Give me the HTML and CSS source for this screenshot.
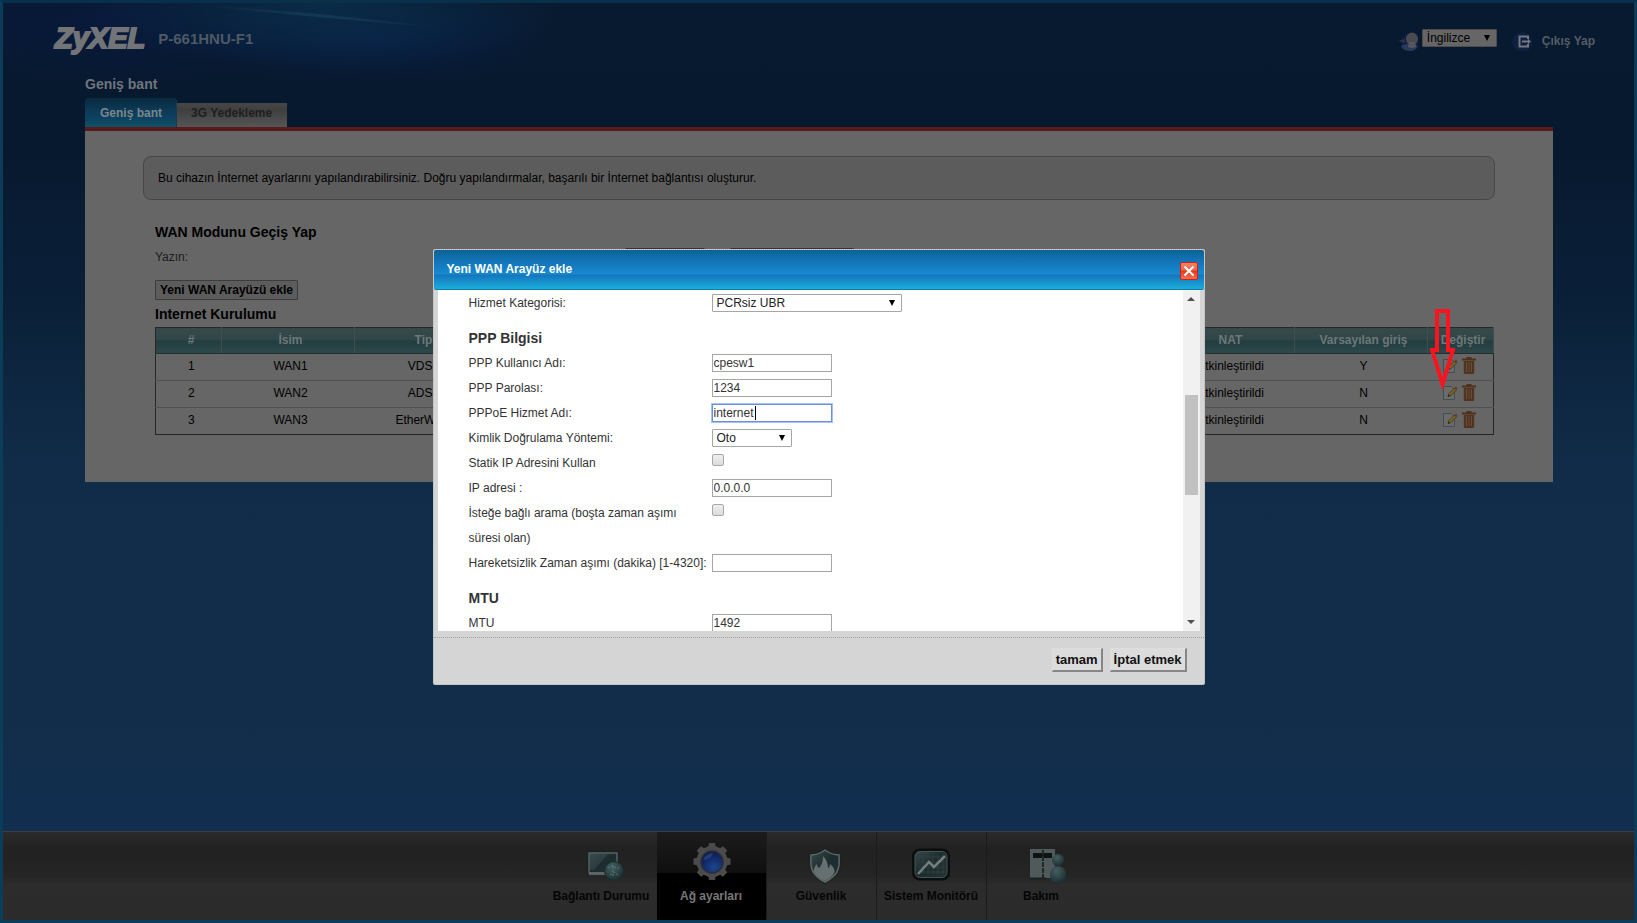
FILE: index.html
```html
<!DOCTYPE html>
<html lang="tr">
<head>
<meta charset="utf-8">
<title>ZyXEL P-661HNU-F1</title>
<link rel="stylesheet" href="styles.css">
</head>
<body>
<svg class="defs" aria-hidden="true">
  <defs>
    <linearGradient id="steel" x1="0" y1="0" x2="1" y2="1"><stop offset="0" stop-color="#39494b"/><stop offset=".5" stop-color="#1c2b2d"/><stop offset="1" stop-color="#243436"/></linearGradient>
    <radialGradient id="lens" cx=".6" cy=".75" r=".8"><stop offset="0" stop-color="#1d458c"/><stop offset=".6" stop-color="#10296a"/><stop offset="1" stop-color="#0b173c"/></radialGradient>
    <radialGradient id="ball" cx=".4" cy=".3" r=".7"><stop offset="0" stop-color="#445f61"/><stop offset="1" stop-color="#1c3033"/></radialGradient>
    <linearGradient id="beam" x1="0" y1="0" x2="1" y2="0"><stop offset="0" stop-color="#2c5f80" stop-opacity="0"/><stop offset=".5" stop-color="#2c5f80" stop-opacity=".3"/><stop offset="1" stop-color="#2c5f80" stop-opacity="0"/></linearGradient>
    <symbol id="edit" viewBox="0 0 16 16">
      <path d="M1.500 1.500h8l3 3v10h-11z" fill="#6b6b6b" stroke="#454c52"/>
      <path d="M6 11.500 7 8.500 12.500 3l2 2L9 10.500z" fill="#7a6522" stroke="#3d3412" stroke-width=".8"/>
      <path d="M12.300 3.200 14 1.500l1.500 1.500-1.400 1.700z" fill="#6b3a2c"/>
      <path d="M6 11.500l.6-1.800 1.200 1.200z" fill="#171717"/>
    </symbol>
    <symbol id="trash" viewBox="0 0 14 17">
      <path d="M0 1.500h4.500V0h5v1.500H14v2H0z" fill="#4e301b"/>
      <path d="M1.800 4h10.400v11.500q0 1.500-1.500 1.500H3.300q-1.500 0-1.500-1.500z" fill="#51331e"/>
      <path d="M4.500 5v10M7 5v10M9.500 5v10" stroke="#67513f" stroke-width=".9"/>
    </symbol>
  </defs>
</svg>
<div class="frame">
  <svg class="beam" viewBox="0 0 260 40" aria-hidden="true"><path d="M0 2Q120 8 260 26Q120 14 0 2z" fill="url(#beam)"/></svg>
  <header class="top">
    <div class="brand"><span class="logo">ZyXEL</span><span class="model">P-661HNU-F1</span></div>
    <div class="tools">
      <svg class="tool-icon" viewBox="0 0 22 20" aria-hidden="true">
        <circle cx="12" cy="11" r="8.500" fill="#111f40"/>
        <path d="M0 10l7-2v4z" fill="#22334f"/>
        <path d="M3 15q9-5 17 0-2 5-8 5-7 0-9-5z" fill="#293a5c"/>
        <ellipse cx="14" cy="8" rx="6" ry="6.500" fill="#4b4a50"/>
        <path d="M11 11h6l1 5q-4 2-8 0z" fill="#54575f"/>
      </svg>
      <select class="lang" aria-label="Dil"><option>İngilizce</option></select>
      <a class="logout" href="#">
        <svg class="tool-icon" viewBox="0 0 22 20" aria-hidden="true">
          <circle cx="10" cy="11" r="10" fill="#0f2042"/>
          <path d="M16 8V5.500H7.500v10H16V13M10 10.500h7" fill="none" stroke="#77797e" stroke-width="2"/>
          <path d="M16 8l3 2.500-3 2.500z" fill="#77797e"/>
        </svg>
        <span>Çıkış Yap</span>
      </a>
    </div>
  </header>

  <main class="page">
    <h1 class="title">Geniş bant</h1>
    <nav class="tabs">
      <a class="tab tab-on" href="#">Geniş bant</a>
      <a class="tab" href="#">3G Yedekleme</a>
    </nav>
    <section class="panel">
      <p class="info">Bu cihazın İnternet ayarlarını yapılandırabilirsiniz. Doğru yapılandırmalar, başarılı bir İnternet bağlantısı oluşturur.</p>
      <div class="inner">
        <h2 class="h">WAN Modunu Geçiş Yap</h2>
        <div class="type-row">
          <span class="type-label">Yazın:</span>
          <select class="dim type-a" aria-label="Yazın"></select>
          <select class="dim type-b" aria-label="Mod"></select>
        </div>
        <button class="add" type="button">Yeni WAN Arayüzü ekle</button>
        <h2 class="h">Internet Kurulumu</h2>
        <div class="table-wrap">
          <table class="wan">
            <colgroup><col class="c5"><col class="c10"><col class="c10"><col><col class="c10"><col class="c10"><col class="c5"></colgroup>
            <thead><tr><th>#</th><th>İsim</th><th>Tip</th><th></th><th>NAT</th><th>Varsayılan giriş</th><th>Değiştir</th></tr></thead>
            <tbody>
              <tr><td>1</td><td>WAN1</td><td>VDSL</td><td></td><td>Etkinleştirildi</td><td>Y</td><td class="act-cell"><span class="acts"><svg class="edit"><use href="#edit"/></svg><svg class="trash"><use href="#trash"/></svg></span></td></tr>
              <tr><td>2</td><td>WAN2</td><td>ADSL</td><td></td><td>Etkinleştirildi</td><td>N</td><td class="act-cell"><span class="acts"><svg class="edit"><use href="#edit"/></svg><svg class="trash"><use href="#trash"/></svg></span></td></tr>
              <tr><td>3</td><td>WAN3</td><td>EtherWAN</td><td></td><td>Etkinleştirildi</td><td>N</td><td class="act-cell"><span class="acts"><svg class="edit"><use href="#edit"/></svg><svg class="trash"><use href="#trash"/></svg></span></td></tr>
            </tbody>
          </table>
          <svg class="pointer" viewBox="0 0 25 80" aria-hidden="true"><path d="M7 2h11v39h5L12.500 75 2 41h5z" fill="none" stroke="#fb1420" stroke-width="4"/></svg>
        </div>
      </div>
    </section>
  </main>

  <nav class="dock">
    <a class="dock-item" href="#">
      <svg class="dock-icon" viewBox="0 0 44 44" aria-hidden="true">
        <g transform="translate(3)">
        <rect x="5" y="11" width="32" height="24" rx="1" fill="#182122"/>
        <rect x="7" y="13" width="28" height="20" fill="url(#steel)" stroke="#566163" stroke-width="1.500"/>
        <path d="M8 14h18L12 30H8z" fill="#38484a" opacity=".6"/>
        <path d="M7 33.500h28" stroke="#5a6465" stroke-width="3"/>
        <circle cx="32" cy="31" r="9.500" fill="url(#ball)" stroke="#1a2a2c"/>
        <path d="M26 28l4-3 5 4 3-2M28 35l4-3 4 3M31 26v11" fill="none" stroke="#647b7b" stroke-width="1" stroke-dasharray="2 2"/>
        </g>
      </svg>
      <span>Bağlantı Durumu</span>
    </a>
    <a class="dock-item dock-on" href="#">
      <svg class="dock-icon" viewBox="0 0 44 44" aria-hidden="true">
        <g fill="#4b4b4b">
          <g id="teeth"><path d="M19 8l1-5h6l1 5zM19 35l1 5h6l1-5z"/></g>
          <use href="#teeth" transform="rotate(45 23 21.500)"/><use href="#teeth" transform="rotate(90 23 21.500)"/><use href="#teeth" transform="rotate(135 23 21.500)"/>
          <circle cx="23" cy="21.500" r="15.500"/>
        </g>
        <circle cx="23" cy="22" r="11" fill="url(#lens)" stroke="#2e2c3a" stroke-width="1.500"/>
        <path d="M14 20q3-7 10-7-1 6-10 7z" fill="#3a5590" opacity=".5"/>
      </svg>
      <span>Ağ ayarları</span>
    </a>
    <a class="dock-item" href="#">
      <svg class="dock-icon" viewBox="0 0 44 44" aria-hidden="true">
        <path d="M26 10q-7 5-14 5-1 11 2 17 4 6 12 10 8-4 12-10 3-6 2-17-7 0-14-5z" fill="url(#steel)" stroke="#1c2222" stroke-width="4"/>
        <path d="M26 10q-7 5-14 5-1 11 2 17 4 6 12 10 8-4 12-10 3-6 2-17-7 0-14-5z" fill="url(#steel)" stroke="#5f6767" stroke-width="1.500"/>
        <path d="M26 41q-9-4-11.500-10 1-5 3.500-7 0 3 2 4 4-4 4-12 5 5 5 12 2-1 2-4 5 4 4.500 8Q33 38 26 41z" fill="#667070"/>
      </svg>
      <span>Güvenlik</span>
    </a>
    <a class="dock-item" href="#">
      <svg class="dock-icon" viewBox="0 0 44 44" aria-hidden="true">
        <rect x="4.500" y="10" width="35" height="29" rx="6" fill="url(#steel)" stroke="#0a0e0e" stroke-width="3"/>
        <rect x="6" y="11.500" width="32" height="26" rx="5" fill="none" stroke="#465353"/>
        <path d="M10 17h26M10 22h26M10 27h26M10 32h26M14 14v20M19 14v20M24 14v20M29 14v20M34 14v20" stroke="#354544" stroke-width=".7"/>
        <path d="M9 34l11-12 5 5 11-11" fill="none" stroke="#767f7f" stroke-width="2.500"/>
      </svg>
      <span>Sistem Monitörü</span>
    </a>
    <a class="dock-item" href="#">
      <svg class="dock-icon" viewBox="0 0 44 44" aria-hidden="true">
        <path d="M11 9h25v29H11z" fill="#515a5b"/>
        <path d="M14 13h19v5H14z" fill="#0e1212"/>
        <path d="M24 10v29" stroke="#202828" stroke-width="2" stroke-dasharray="5 1"/>
        <path d="M11 38.500h16" stroke="#182020" stroke-width="2"/>
        <circle cx="39" cy="20" r="6" fill="url(#ball)"/>
        <path d="M31 36q0-10 8-10t8 10q-1 7-8 7t-8-7z" fill="url(#ball)"/>
      </svg>
      <span>Bakım</span>
    </a>
  </nav>
</div>

<div class="overlay">
  <form class="dialog" role="dialog" aria-labelledby="dlg-title">
    <div class="dlg-head">
      <h2 class="dlg-title" id="dlg-title">Yeni WAN Arayüz ekle</h2>
      <button class="close" type="button" aria-label="Kapat"><svg viewBox="0 0 12 12" aria-hidden="true"><path d="M1.500 1.500l9 9M10.500 1.500l-9 9" stroke="#fff" stroke-width="2"/></svg></button>
    </div>
    <div class="dlg-body">
      <div class="fields">
        <div class="row"><label for="cat">Hizmet Kategorisi:</label><select id="cat" class="wide"><option>PCRsiz UBR</option></select></div>
        <h3 class="sec">PPP Bilgisi</h3>
        <div class="row"><label for="user">PPP Kullanıcı Adı:</label><input id="user" type="text" value="cpesw1"></div>
        <div class="row"><label for="pass">PPP Parolası:</label><input id="pass" type="text" value="1234"></div>
        <div class="row"><label for="svc">PPPoE Hizmet Adı:</label><span class="active-field"><input id="svc" type="text" value="internet"><span class="caret"></span></span></div>
        <div class="row"><label for="auth">Kimlik Doğrulama Yöntemi:</label><select id="auth" class="narrow"><option>Oto</option></select></div>
        <div class="row"><label for="static">Statik IP Adresini Kullan</label><input id="static" type="checkbox"></div>
        <div class="row"><label for="ip">IP adresi :</label><input id="ip" type="text" value="0.0.0.0"></div>
        <div class="row"><label for="demand">İsteğe bağlı arama (boşta zaman aşımı süresi olan)</label><input id="demand" type="checkbox"></div>
        <div class="row"><label for="idle">Hareketsizlik Zaman aşımı (dakika) [1-4320]:</label><input id="idle" type="text"></div>
        <h3 class="sec">MTU</h3>
        <div class="row"><label for="mtu">MTU</label><input id="mtu" type="text" value="1492"></div>
      </div>
      <div class="bar" aria-hidden="true"><span class="arrow-up"></span><span class="track"><span class="thumb"></span></span><span class="arrow-down"></span></div>
    </div>
    <div class="dlg-foot">
      <button class="act" type="button">tamam</button>
      <button class="act" type="button">İptal etmek</button>
    </div>
  </form>
</div>
</body>
</html>
```
FILE: styles.css
```css
* { box-sizing: border-box; }
body, input, select, button {
  font-family: "Liberation Sans", Arial, sans-serif;
  font-size: 12px;
}
body { margin: 0; color: #000; }
h1, h2, h3, p { margin: 0; }
a { text-decoration: none; }
.defs { position: absolute; width: 0; height: 0; }

.frame {
  position: relative;
  min-height: 100vh;
  display: flex;
  flex-direction: column;
  border: 3px solid #0b3c5a;
  border-top-color: #08304a;
  background:
    radial-gradient(ellipse 240px 60px at 320px 5px, rgba(10, 48, 76, .75), transparent),
    radial-gradient(ellipse 180px 45px at 370px 35px, rgba(9, 36, 90, .5), transparent),
    radial-gradient(ellipse 240px 60px at 110px 20px, rgba(9, 24, 70, .5), transparent),
    linear-gradient(#081a30, #07192f 150px, #0a2038 300px, #112c48 460px, #112d49 720px, #132f55);
}
.beam { position: absolute; left: 190px; top: 0; width: 260px; height: 40px; }

.top {
  position: relative;
  display: flex;
  justify-content: space-between;
  align-items: flex-start;
  padding: 17px 39px 0 52px;
  height: 68px;
}
.brand { display: flex; align-items: center; gap: 13px; height: 36px; }
.logo {
  font-size: 29px;
  font-weight: 700;
  font-style: italic;
  color: #727477;
  -webkit-text-stroke: 2px #727477;
}
.model { font-size: 15px; font-weight: 700; color: #4f5966; }
.tools { display: flex; align-items: center; height: 42px; }
.tool-icon { width: 22px; height: 20px; display: block; }

select {
  appearance: none;
  height: 18px;
  padding: 0 4px;
  border: 1px solid #a6a6a6;
  border-radius: 1px;
  color: #222;
  background: #fff url("data:image/svg+xml,%3Csvg xmlns='http://www.w3.org/2000/svg' width='6' height='6'%3E%3Cpath d='M0 0h6L3 6z'/%3E%3C/svg%3E") no-repeat right 6px center;
}
.lang { width: 75px; margin: 0 15px 6px 2px; border-color: #4c4c4c; background-color: #666; color: #000; }
.logout { display: flex; align-items: center; gap: 8px; font-weight: 700; color: #545c67; }

.page { flex: 1; padding: 0 81px 0 82px; }
.title { font-size: 14px; line-height: 26px; color: #6f757d; }
.tabs { display: flex; align-items: flex-end; height: 30px; }
.tab {
  height: 24px;
  padding: 0 15px 0 14px;
  line-height: 20px;
  font-weight: 700;
  color: #1f1f1f;
  background: linear-gradient(#474747, #3f3f3f 30%, #565656);
}
.tab-on {
  height: 29px;
  padding: 0 14px 0 15px;
  line-height: 30px;
  border-right: 1px solid #183a50;
  border-radius: 4px 4px 0 0;
  color: #7d868a;
  background: linear-gradient(#08293e, #0c3b58 45%, #0e4260 70%, #0f5266);
}
.panel { border-top: 4px solid #571a1d; padding: 25px 58px 47px; background: #666; }
.info {
  padding: 0 14px;
  line-height: 42px;
  border: 1px solid #474747;
  border-radius: 8px;
  background: #5c5c5c;
}
.inner { padding: 19px 1px 0 12px; }
.h { font-size: 14px; line-height: 26px; }
.type-row { display: flex; align-items: flex-start; height: 35px; padding-top: 3px; color: #1c1c1c; }
.type-label { width: 470px; line-height: 18px; }
.dim { border-color: #333; background-color: #666; }
.type-a { width: 80px; margin-right: 25px; }
.type-b { width: 124px; }
.add {
  display: block;
  height: 20px;
  margin-bottom: 1px;
  padding: 0 4px;
  border: 1px solid #3c3c3c;
  border-radius: 1px;
  font-weight: 700;
  background: #5c5c5c;
}

.table-wrap { position: relative; }
.wan {
  width: 100%;
  table-layout: fixed;
  border-collapse: collapse;
  border: 1px solid #272727;
}
.c5 { width: 66px; } .c10 { width: 133px; }
.wan th, .wan td { height: 27px; padding: 0 0 2px 5px; text-align: center; white-space: nowrap; }
.wan th {
  height: 26px;
  color: #6d7878;
  border-right: 1px solid #3f4f50;
  border-bottom: 1px solid #262f30;
  background: linear-gradient(#38494b, #2f4649 45%, #233c40 50%, #2c494a);
}
.wan td { padding-bottom: 3px; border-bottom: 1px solid #505050; }
.wan .act-cell { padding: 0 3px 3px 0; }
.wan tbody tr:last-child td { border-bottom-color: #272727; }
.acts { display: flex; justify-content: center; align-items: center; gap: 4px; }
.edit { width: 16px; height: 16px; }
.trash { width: 14px; height: 17px; }
.pointer { position: absolute; z-index: 1; right: 39px; top: -18px; width: 25px; height: 80px; }

.dock {
  display: flex;
  justify-content: center;
  height: 89px;
  padding-left: 6px;
  border-top: 1px solid #3a3f44;
  background: linear-gradient(#2b2b2b, #212121 20%, #252525 50%, #2c2c2c 60%, #2b2b2b);
}
.dock-item {
  width: 110px;
  display: flex;
  flex-direction: column;
  align-items: center;
  padding-top: 8px;
  border-right: 1px solid #1b1b1b;
  font-weight: 700;
  color: #050505;
}
.dock-item:first-child, .dock-item:last-child { border-right-color: transparent; }
.dock-item span { line-height: 24px; white-space: nowrap; }
.dock-icon { width: 44px; height: 44px; overflow: visible; }
.dock-on { color: #777; background: linear-gradient(#1c1c1c, #0f0f0f 41px, #000 41px); }

.overlay {
  position: absolute;
  inset: 0;
  display: flex;
  justify-content: center;
  align-items: flex-start;
  padding-top: 249px;
  pointer-events: none;
}
.dialog {
  width: 772px;
  border: 1px dotted #b5b5b5;
  border-radius: 2px;
  background: #d5d5d5;
  pointer-events: auto;
}
.dlg-head {
  display: flex;
  justify-content: space-between;
  align-items: center;
  height: 40px;
  padding: 0 6px 0 13px;
  border-bottom: 1px solid #0b7fa8;
  border-radius: 2px;
  background: linear-gradient(#0a6295, #1272b3 25%, #178ad2 62%, #1475bd 64%, #1aaddb);
}
.dlg-title { padding-bottom: 2px; font-size: 12px; color: #fff; }
.close {
  width: 18px;
  height: 18px;
  margin-top: 3px;
  padding: 2px;
  border: 1px solid #dd1c0c;
  border-radius: 2px;
  background: linear-gradient(#ee8468, #e9654a 45%, #e03a18 50%, #ee7254);
}
.close svg { display: block; width: 12px; height: 12px; }

.dlg-body { display: flex; height: 341px; margin: 0 4px; overflow: hidden; background: #fff; }
.fields { flex: 1; padding: 1px 0 0 31px; color: #333; }
.row { display: grid; grid-template-columns: 243px 1fr; align-items: start; line-height: 25px; }
.row label { padding-right: 2px; white-space: nowrap; }
.row label[for="demand"] { padding-right: 30px; white-space: normal; }
.row input, .row select { margin: 3px 0 0; }
.row input[type="text"] {
  display: block;
  width: 120px;
  height: 18px;
  padding: 0 1px;
  border: 1px solid #a6a6a6;
  color: #333;
}
.row .wide { width: 190px; }
.row .narrow { width: 80px; }
.row input[type="checkbox"] {
  appearance: none;
  width: 12px;
  height: 12px;
  border: 1px solid #a8a8a8;
  border-radius: 2px;
  background: linear-gradient(#eee, #dcdcdc);
}
.active-field { position: relative; }
.row .active-field input { border-color: #6a8fdc; outline: 1px solid #a9c0f0; outline-offset: 0; }
.caret { position: absolute; left: 43px; top: 5px; width: 1px; height: 14px; background: #000; }
.sec { margin-top: 10px; font-size: 14px; line-height: 25px; }

.bar { width: 17px; display: flex; flex-direction: column; align-items: center; padding: 7px 0; background: #f1f1f1; }
.arrow-up, .arrow-down { border: 4px solid transparent; }
.arrow-up { border-top: 0; border-bottom-color: #505050; }
.arrow-down { border-bottom: 0; border-top-color: #505050; }
.track { flex: 1; padding-top: 94px; }
.thumb { display: block; width: 13px; height: 100px; background: #c1c1c1; }

.dlg-foot {
  display: flex;
  justify-content: flex-end;
  gap: 7px;
  margin-top: 6px;
  padding: 10px 17px 12px;
  border-top: 1px dotted #a0a0a0;
}
.act {
  height: 24px;
  padding: 0 3px;
  border: 1px solid #dedede;
  border-right: 2px solid #868686;
  border-bottom: 2px solid #868686;
  font-size: 13px;
  font-weight: 700;
  color: #111;
  background: #dcdcdc;
}
```
